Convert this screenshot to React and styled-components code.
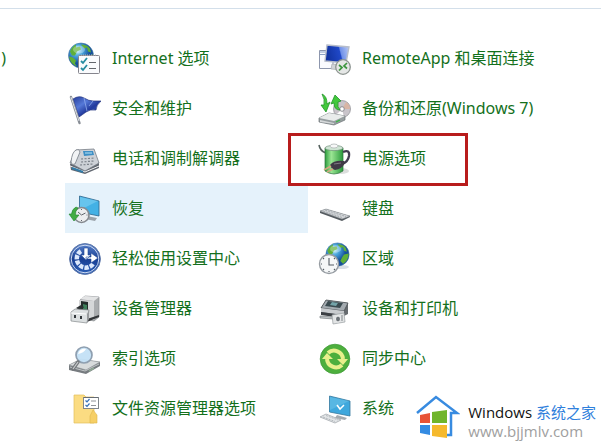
import React from 'react';
import styled, { createGlobalStyle } from 'styled-components';

const GlobalStyle = createGlobalStyle`
  body {
    margin: 0;
    background: #ffffff;
    font-family: 'Noto Sans', 'Noto Sans CJK SC', sans-serif;
  }
`;

const Page = styled.div`
  position: relative;
  min-height: 100vh;
  overflow: hidden;
`;

const TopBar = styled.header`
  height: 8px;
  border-bottom: 1px solid #d3dfea;
`;

const Content = styled.main`
  display: grid;
  grid-template-columns: 65px minmax(0, 1fr);
  padding-top: 24px;
`;

const PreviousColumn = styled.div`
  height: 50px;
  width: 6px;
  display: flex;
  align-items: center;
  justify-content: flex-end;
  overflow: hidden;
  font-size: 16px;
  color: #14701c;
`;

const ItemGrid = styled.ul`
  display: grid;
  grid-template-columns: repeat(auto-fill, 243px);
  column-gap: 7px;
  list-style: none;
  margin: 0;
  padding: 0;
`;

const Item = styled.li`
  position: relative;
  z-index: ${({ $marked }) => ($marked ? 1 : 'auto')};
  height: 50px;
  background: ${({ $hovered }) => ($hovered ? '#e5f2fb' : 'transparent')};
`;

const ItemLink = styled.a`
  display: flex;
  align-items: center;
  gap: 11px;
  height: 100%;
  padding-left: 2px;
  font-size: 16px;
  line-height: 24px;
  white-space: nowrap;
  text-decoration: none;
  color: #14701c;
`;

const Icon = styled.svg`
  flex: none;
  width: 34px;
  height: 36px;
`;

const Marker = styled.span`
  position: absolute;
  inset: 0 auto auto -27px;
  box-sizing: border-box;
  width: 180px;
  height: 53px;
  border: 3px solid #b81c1c;
  pointer-events: none;
`;

const Watermark = styled.aside`
  position: absolute;
  right: 0;
  bottom: 0;
  display: flex;
  align-items: flex-end;
  gap: 8px;
  padding: 28px 5px 4px 8px;
  background: #ffffff;
`;

const House = styled.svg`
  width: 44px;
  height: 46px;
`;

const Brand = styled.div`
  font-family: 'Open Sans', 'Noto Sans CJK SC', sans-serif;
  font-size: 15px;
  line-height: 20px;
  white-space: nowrap;
  color: #111111;
`;

const BrandName = styled.span`
  color: #2f80dc;
`;

const Site = styled.div`
  font-family: 'Open Sans', sans-serif;
  font-size: 15px;
  line-height: 18px;
  color: #a0a0a0;
`;

const Globe = ({ id, cx, cy, scale = 1 }) => (
  <g transform={`translate(${cx} ${cy}) scale(${scale})`}>
    <radialGradient id={id} cx="35%" cy="30%">
      <stop offset="0" stopColor="#c8f1fb" />
      <stop offset="0.45" stopColor="#4aa5dc" />
      <stop offset="1" stopColor="#16509c" />
    </radialGradient>
    <circle r="12.5" fill={`url(#${id})`} stroke="#3e75a4" strokeWidth="0.6" />
    <path d="M-5-11Q-9-9-11-4L-9 0-6 0-4-4 0-6-1-9-5-8ZM0-11L3-7 6-8 7-4 10-3 9-7Q6-11 0-11ZM-12 1L-8 2-5 5-6 8-4 11Q-11 8-12 1ZM7 0L12-1Q12 6 6 10L3 7 5 3Z" fill="#5faf38" />
    <ellipse cx="-2" cy="-6" rx="6" ry="4" fill="#ffffff" opacity="0.3" />
  </g>
);

const InternetIcon = () => (
  <Icon viewBox="0 0 34 36" aria-hidden="true">
    <Globe id="net" cx={14} cy={15.5} />
    <rect x="11.5" y="15.5" width="21" height="18" rx="1" fill="#fafbfd" stroke="#85858d" />
    <path d="M14 15h16" stroke="#b5b8c2" strokeDasharray="1 1" />
    <path d="M14 21l2 2 4-5M14 28l2 2 4-5" fill="none" stroke="#278ca1" strokeWidth="1.8" />
    <path d="M22 22.5h7M22 28.5h7" stroke="#62666c" />
  </Icon>
);

const FlagIcon = () => (
  <Icon viewBox="0 0 34 36" aria-hidden="true">
    <linearGradient id="flag" x1="0" y1="0" x2="1" y2="1">
      <stop offset="0" stopColor="#263c98" />
      <stop offset="0.35" stopColor="#5579d8" />
      <stop offset="0.6" stopColor="#233b9e" />
      <stop offset="1" stopColor="#4064c7" />
    </linearGradient>
    <path d="M6 9Q12 5 17 8T26 11L34 11Q29 15 29 20Q23 19 19 22T12 27Z" fill="url(#flag)" stroke="#243480" strokeWidth="0.7" />
    <path d="M17 8L20 21M26 11L22 16" stroke="#8fabed" strokeWidth="0.8" />
    <path d="M4 7L12.500 33" stroke="#888d95" strokeWidth="2.4" strokeLinecap="round" />
    <path d="M4 7L12 31" stroke="#e1e5ec" strokeWidth="0.9" />
  </Icon>
);

const PhoneIcon = () => (
  <Icon viewBox="0 0 34 36" aria-hidden="true">
    <path d="M3 24L4 30 18 34 32 28 32 22Z" fill="#616770" />
    <path d="M3 23L9 10 27 9 32 23 18 31Z" fill="#cdd1d7" stroke="#777d86" strokeWidth="0.8" />
    <path d="M16 11L26 11 27 15 17 16Z" fill="#3d8fc5" />
    <path d="M18 13L25 13" stroke="#b9e3f5" />
    <path d="M14 19L28 18M14 22L27 21M13 25L26 24" stroke="#7d838b" strokeWidth="1.2" strokeDasharray="2 1.5" />
    <path d="M9 10Q5 12 4 22Q5 26 8 24L13 12Q12 8 9 10Z" fill="#f1f3f5" stroke="#747b84" strokeWidth="0.8" />
    <path d="M3 26L18 32 32 26" fill="none" stroke="#f4f4f5" />
    <path d="M5 28L16 32" stroke="#327ca8" strokeWidth="2" />
  </Icon>
);

const RecoveryIcon = () => (
  <Icon viewBox="0 0 34 36" aria-hidden="true">
    <path d="M20 26L30 28 28 31 18 29Z" fill="#9ba3aa" />
    <path d="M12.500 6L32 11 32 26 12.500 22Z" fill="#43b1e5" stroke="#2d658c" strokeWidth="0.8" />
    <path d="M13 7L31 11 13 20Z" fill="#85d4f4" opacity="0.55" />
    <circle cx="14.500" cy="25" r="7.5" fill="#eceef0" stroke="#858a90" strokeWidth="1.6" />
    <path d="M11 22l3.500 3 4-2M14.500 30v1M14.500 19v1M19.500 25h1" fill="none" stroke="#60656c" />
    <path d="M9 17Q5 19 4.500 24H2L7 31 12 25H8.500Q8 21 11 18Z" fill="#43ac43" stroke="#22842b" strokeWidth="0.6" />
  </Icon>
);

const EaseIcon = () => (
  <Icon viewBox="0 0 34 36" aria-hidden="true">
    <linearGradient id="ease" x1="0" y1="0" x2="0" y2="1">
      <stop offset="0" stopColor="#5a83cc" />
      <stop offset="0.5" stopColor="#183e93" />
      <stop offset="1" stopColor="#2c60b8" />
    </linearGradient>
    <circle cx="18" cy="19" r="15.4" fill="url(#ease)" stroke="#5f78a8" />
    <circle cx="18" cy="19" r="13.8" fill="none" stroke="#d0dcf2" strokeWidth="1" />
    <path d="M26 24A9 9 0 1 1 14 11" fill="none" stroke="#dce8fc" strokeWidth="4.5" strokeDasharray="4.200 1.2" />
    <path d="M17 8h4v7h3l-5 5-5-5h3ZM19 17h5v-4l7 5-7 5v-4h-5Z" fill="#ffffff" stroke="#244c9b" strokeWidth="0.6" />
  </Icon>
);

const DeviceIcon = () => (
  <Icon viewBox="0 0 34 36" aria-hidden="true">
    <path d="M13 10L18 6 32 7 32 27 27 31 13 28Z" fill="#a9acae" stroke="#898e91" strokeWidth="0.7" />
    <path d="M13 9L18 6 32 7 27 11Z" fill="#e3e4e5" />
    <path d="M13 10L27 11 27 30 13 28Z" fill="#d5d7d8" />
    <path d="M14 11L21 12 21 23 14 22Z" fill="#242d2b" />
    <path d="M16 14l4 1v5l-4-1Z" fill="#3f805b" />
    <path d="M20 32l12-5v-2l-12 4Z" fill="#333638" />
    <path d="M9 18l5-3 3 2-3 4Z" fill="#2b3032" />
    <path d="M4 22L8 19 22 20 20 33 4 31Z" fill="#dce0e1" stroke="#85898c" strokeWidth="0.7" />
    <path d="M20 24L22 20V29L20 33Z" fill="#96999b" />
    <path d="M8 25v3M14 26v3" stroke="#34393d" strokeWidth="2" />
    <path d="M4 23L19 24" fill="none" stroke="#ffffff" />
  </Icon>
);

const IndexIcon = () => (
  <Icon viewBox="0 0 34 36" aria-hidden="true">
    <path d="M2 25L14 19 33 22 33 26 19 34 2 30Z" fill="#777c80" />
    <path d="M2 25L14 19 33 22 19 30Z" fill="#d8dbdc" stroke="#8f9497" strokeWidth="0.6" />
    <path d="M3 27L18 31 32 24" fill="none" stroke="#c1c5c7" />
    <path d="M22 31l5-3" stroke="#8fa894" strokeWidth="1.5" />
    <circle cx="17" cy="15" r="8" fill="#c3e0f5" fillOpacity="0.95" stroke="#8f9fb0" strokeWidth="1.7" />
    <path d="M11 14Q13 8 19 9Q17 13 11 14Z" fill="#ffffff" />
    <path d="M11 22L6 29" stroke="#74787c" strokeWidth="3.500" strokeLinecap="round" />
    <path d="M11 22L6 29" stroke="#c9cccd" strokeWidth="1.2" />
  </Icon>
);

const FolderIcon = () => (
  <Icon viewBox="0 0 34 36" aria-hidden="true">
    <path d="M7 5H17L19 7H27V33H7Z" fill="#fbdc82" stroke="#e3bf5c" strokeWidth="0.7" />
    <path d="M23 33V26L26 20 30 25V33Z" fill="#f6cf66" stroke="#ddb64c" strokeWidth="0.6" />
    <rect x="16.5" y="7.5" width="15" height="11" fill="#ffffff" stroke="#80868b" />
    <path d="M17 7.500h14" stroke="#666c72" />
    <path d="M18.500 10.500l1.5 1.300L22.500 9M18.500 15l1.5 1.300 2.500-2.800" fill="none" stroke="#3370b8" strokeWidth="1.2" />
    <path d="M24 11h5M24 15.500h5" stroke="#909498" />
  </Icon>
);

const RemoteIcon = () => (
  <Icon viewBox="0 0 34 36" aria-hidden="true">
    <linearGradient id="screen" x1="0" y1="0.2" x2="1" y2="0">
      <stop offset="0" stopColor="#1233a0" />
      <stop offset="0.55" stopColor="#2048c8" />
      <stop offset="0.6" stopColor="#6f90e8" />
      <stop offset="1" stopColor="#bccdf8" />
    </linearGradient>
    <path d="M2.500 10.5H16V28.500H2.500Z" fill="#fafbff" stroke="#8d96ad" />
    <path d="M3 12h12M3 14.500h8" stroke="#8aa0c4" />
    <path d="M15 24L25 25 25 30 14 29Z" fill="#d1d4d8" stroke="#a6abb0" strokeWidth="0.7" />
    <path d="M10 5L32 7 29 23 8 21Z" fill="url(#screen)" stroke="#b7bdca" strokeWidth="1.4" />
    <circle cx="26" cy="27" r="7.3" fill="#e5e7e6" stroke="#8d9490" strokeWidth="1.3" />
    <path d="M22 25l3 2.500-3 3M30 23l-3 3 3 2.500" fill="none" stroke="#3c963e" strokeWidth="1.7" />
  </Icon>
);

const BackupIcon = () => (
  <Icon viewBox="0 0 34 36" aria-hidden="true">
    <circle cx="25" cy="19" r="8.5" fill="#c9c4ca" stroke="#96969b" strokeWidth="0.8" />
    <path d="M25 19L29 12A8 8 0 0 1 33 19Z" fill="#d8b5a5" />
    <path d="M25 19L19 25A8 8 0 0 0 27 27Z" fill="#ffffff" />
    <circle cx="25" cy="19" r="2.3" fill="#ffffff" stroke="#8c8c91" />
    <path d="M2 28L12 23 28 26 28 30 17 35 2 32Z" fill="#979ea0" stroke="#6d7477" strokeWidth="0.7" />
    <path d="M2 28L12 23 28 26 17 31Z" fill="#e9eceb" />
    <path d="M3 30L17 33V34L3 32Z" fill="#d6d9da" />
    <path d="M19 32l4-2" stroke="#37b943" strokeWidth="1.3" />
    <path d="M5 4Q10 6 10 14L13 12 9 22 4 15 7 15Q8 9 5 4ZM23 20Q17 20 17 13L14 14 18 5 24 11 21 12Q20 17 23 20Z" fill="#43c83c" stroke="#23962a" strokeWidth="0.8" />
  </Icon>
);

const PowerIcon = () => (
  <Icon viewBox="0 0 34 36" aria-hidden="true">
    <linearGradient id="cell">
      <stop offset="0" stopColor="#2d9d3e" />
      <stop offset="0.35" stopColor="#9be694" />
      <stop offset="1" stopColor="#2a9a3c" />
    </linearGradient>
    <ellipse cx="24" cy="31" rx="8" ry="3" fill="#dcdedd" />
    <path d="M2 5Q3 11 9 13" fill="none" stroke="#56625f" strokeWidth="1.6" />
    <path d="M8 8V31Q17 37 26 31V8Z" fill="url(#cell)" stroke="#2e713c" strokeWidth="0.7" />
    <ellipse cx="17" cy="8" rx="9" ry="2.6" fill="#cfe5d4" stroke="#718e7b" strokeWidth="0.7" />
    <ellipse cx="17" cy="6" rx="4" ry="2" fill="#f7f8f8" stroke="#a6aead" strokeWidth="0.7" />
    <path d="M26 12Q33 9 32 16Q31 22 25 24" fill="none" stroke="#423c50" strokeWidth="2.3" />
    <path d="M13 25Q17 20 27 21L28 23Q25 29 18 30 14 29 13 25Z" fill="#403a46" />
    <path d="M14 26L7 30M16 29L10 32" stroke="#d3a982" strokeWidth="1.7" />
    <path d="M17 24l7-1" stroke="#807984" />
  </Icon>
);

const KeyboardIcon = () => (
  <Icon viewBox="0 0 34 36" aria-hidden="true">
    <path d="M3 21L9 19 33 26 33 27 25 31 3 23Z" fill="#555b60" />
    <path d="M3 21L9 19 33 26 25 29Z" fill="#d3d6d9" stroke="#868c91" strokeWidth="0.5" />
    <path d="M6 21L25 27.500M8 20L29 26.500" stroke="#9ba0a5" strokeWidth="0.8" strokeDasharray="2 1" />
  </Icon>
);

const RegionIcon = () => (
  <Icon viewBox="0 0 34 36" aria-hidden="true">
    <ellipse cx="24" cy="27" rx="8" ry="2" fill="#d9dfe6" />
    <Globe id="region" cx={20.5} cy={14.5} scale={0.93} />
    <circle cx="12" cy="24" r="9.5" fill="#f5f7f8" stroke="#969ca2" strokeWidth="1.4" />
    <path d="M12 18v7h5M12 31v1M4 24h1M19 24h1M6 18l1 1M18 18l-1 1M6 30l1-1M18 30l-1-1" fill="none" stroke="#555d64" strokeWidth="1.1" />
  </Icon>
);

const PrinterIcon = () => (
  <Icon viewBox="0 0 34 36" aria-hidden="true">
    <path d="M4 18L9 10 31 13 31 24 25 27 4 24Z" fill="#666b6f" />
    <path d="M4 18L9 10 31 13 27 21Z" fill="#a4abb0" stroke="#4b5054" strokeWidth="0.8" />
    <path d="M11 11L26 13 23 18 8 16Z" fill="#3b4b50" />
    <path d="M15 12l6 1-2 3-6-1Z" fill="#73a3a8" />
    <path d="M4 18L27 21V25L4 22Z" fill="#c9cccf" />
    <path d="M4 22L18 24V27L4 25Z" fill="#3b3f43" />
    <path d="M3 26L17 27V29L3 28Z" fill="#bfc3c5" stroke="#6d7377" strokeWidth="0.6" />
    <path d="M15 25L27 23 28 32 16 34Z" fill="#e2e4e5" stroke="#9a9fa2" strokeWidth="0.7" />
    <ellipse cx="21" cy="29" rx="2.500" ry="3" fill="#6c7277" stroke="#f4f5f5" />
    <path d="M25 25v6" stroke="#81878a" />
  </Icon>
);

const SyncIcon = () => (
  <Icon viewBox="0 0 34 36" aria-hidden="true">
    <circle cx="18" cy="19" r="14.800" fill="#4daf3d" stroke="#3c9733" strokeWidth="0.7" />
    <path d="M11 13A9 9 0 0 1 26 19M25 25A9 9 0 0 1 10 19" fill="none" stroke="#e8ef8b" strokeWidth="4" />
    <path d="M20 19H31L26 25ZM5 19H16L10 13Z" fill="#e8ef8b" />
  </Icon>
);

const SystemIcon = () => (
  <Icon viewBox="0 0 34 36" aria-hidden="true">
    <path d="M20 25L30 28 28 30 18 28Z" fill="#a5acb1" />
    <path d="M12.500 6L33 11 33 26 12.500 22Z" fill="#3fa8dd" stroke="#35799e" strokeWidth="0.8" />
    <path d="M13 7L32 11 13 20Z" fill="#77c9ec" opacity="0.45" />
    <path d="M20 15l3 4 4-4" fill="none" stroke="#ffffff" strokeWidth="1.5" />
    <path d="M3 27L9 24 24 30 18 33Z" fill="#e3e6e8" stroke="#9ba1a6" strokeWidth="0.7" />
    <path d="M6 27L18 31.500M9 25.500L21 30" stroke="#9fa5aa" strokeWidth="0.7" strokeDasharray="2 1" />
  </Icon>
);

const items = [
  { label: 'Internet 选项', icon: InternetIcon },
  { label: 'RemoteApp 和桌面连接', icon: RemoteIcon },
  { label: '安全和维护', icon: FlagIcon },
  { label: '备份和还原(Windows 7)', icon: BackupIcon },
  { label: '电话和调制解调器', icon: PhoneIcon },
  { label: '电源选项', icon: PowerIcon, marked: true },
  { label: '恢复', icon: RecoveryIcon, hovered: true },
  { label: '键盘', icon: KeyboardIcon },
  { label: '轻松使用设置中心', icon: EaseIcon },
  { label: '区域', icon: RegionIcon },
  { label: '设备管理器', icon: DeviceIcon },
  { label: '设备和打印机', icon: PrinterIcon },
  { label: '索引选项', icon: IndexIcon },
  { label: '同步中心', icon: SyncIcon },
  { label: '文件资源管理器选项', icon: FolderIcon },
  { label: '系统', icon: SystemIcon },
];

const App = () => (
  <Page>
    <GlobalStyle />
    <TopBar />
    <Content>
      <PreviousColumn>)</PreviousColumn>
      <ItemGrid>
        {items.map(({ label, icon: ItemIcon, hovered, marked }) => (
          <Item key={label} $hovered={hovered} $marked={marked}>
            <ItemLink href="#">
              <ItemIcon />
              {label}
            </ItemLink>
            {marked && <Marker />}
          </Item>
        ))}
      </ItemGrid>
    </Content>
    <Watermark>
      <House viewBox="0 0 44 46" aria-hidden="true">
        <path d="M1 19L20 3 41 19H35V41H31" fill="none" stroke="#388be0" strokeWidth="2.500" />
        <path d="M4 21L14 19V29H4Z" fill="#e85336" />
        <path d="M16 18L31 16V29H16Z" fill="#70b52b" />
        <path d="M4 31H14V41L4 39Z" fill="#348be2" />
        <path d="M16 31H31V44L16 42Z" fill="#f5b92d" />
      </House>
      <div>
        <Brand>
          Windows <BrandName>系统之家</BrandName>
        </Brand>
        <Site>www.bjjmlv.com</Site>
      </div>
    </Watermark>
  </Page>
);

export default App;
